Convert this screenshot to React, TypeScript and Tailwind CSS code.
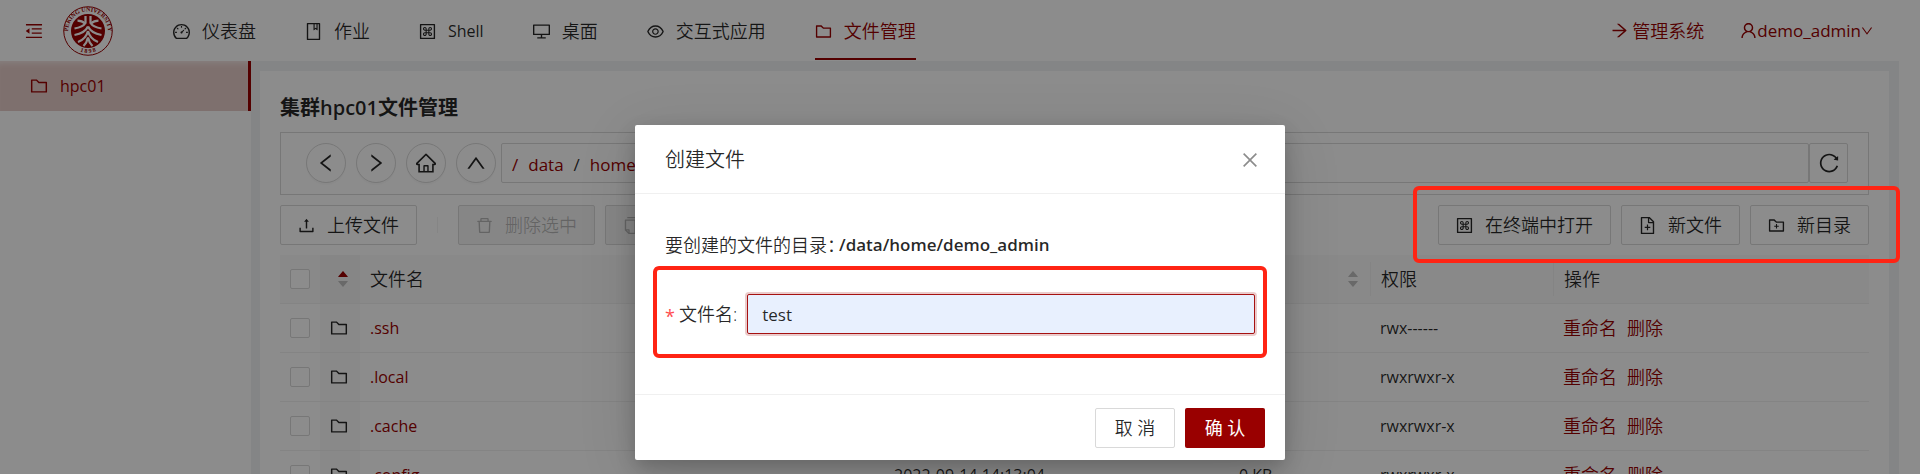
import React from "react";
import {
  AiFillCaretDown,
  AiFillCaretUp,
  AiOutlineArrowRight,
  AiOutlineBook,
  AiOutlineClose,
  AiOutlineCopy,
  AiOutlineDashboard,
  AiOutlineDelete,
  AiOutlineDesktop,
  AiOutlineDown,
  AiOutlineEye,
  AiOutlineFileAdd,
  AiOutlineFolder,
  AiOutlineFolderAdd,
  AiOutlineHome,
  AiOutlineLeft,
  AiOutlineMacCommand,
  AiOutlineMenuFold,
  AiOutlineReload,
  AiOutlineRight,
  AiOutlineUp,
  AiOutlineUpload,
  AiOutlineUser,
} from "react-icons/ai";
import type { IconType } from "react-icons";

// The glyphs carry a 64-unit margin inside their 1024-unit box.
const TRIMMED = "64 64 896 896";

const navItems: { label: string; icon: IconType; latin?: boolean; active?: boolean }[] = [
  { label: "仪表盘", icon: AiOutlineDashboard },
  { label: "作业", icon: AiOutlineBook },
  { label: "Shell", icon: AiOutlineMacCommand, latin: true },
  { label: "桌面", icon: AiOutlineDesktop },
  { label: "交互式应用", icon: AiOutlineEye },
  { label: "文件管理", icon: AiOutlineFolder, active: true },
];

const files = [
  { name: ".ssh", date: "2022-09-14 14:10:22", size: "0 KB", mode: "rwx------" },
  { name: ".local", date: "2022-09-14 14:12:51", size: "0 KB", mode: "rwxrwxr-x" },
  { name: ".cache", date: "2022-09-14 14:12:58", size: "0 KB", mode: "rwxrwxr-x" },
  { name: ".config", date: "2022-09-14 14:13:04", size: "0 KB", mode: "rwxrwxr-x" },
];

function Logo() {
  return (
    <svg viewBox="0 0 100 100" className="size-[50px]" role="img" aria-label="Peking University">
      <defs>
        <path id="ring-top" d="M 13 66 A 40 40 0 1 1 87 66" />
        <path id="ring-bottom" d="M 28 88 A 44 44 0 0 0 72 88" />
      </defs>
      <circle cx="50" cy="50" r="48.5" fill="#fff" stroke="#900" strokeWidth="2" />
      <circle cx="50" cy="50" r="34" fill="#900" />
      <text fill="#900" fontFamily="Liberation Serif" fontSize="12" fontWeight="700">
        <textPath href="#ring-top" startOffset="50%" textAnchor="middle">PEKING UNIVERSITY</textPath>
      </text>
      <text fill="#900" fontFamily="Liberation Serif" fontSize="12" fontWeight="700">
        <textPath href="#ring-bottom" startOffset="50%" textAnchor="middle">1 8 9 8</textPath>
      </text>
      <g fill="none" stroke="#fff" strokeWidth="4.5">
        <path d="M45 20 V34 Q40 42 23 45" />
        <path d="M55 20 V34 Q60 42 77 45" />
        <path d="M29 29 Q38 29 44 35" />
        <path d="M71 29 Q62 29 56 35" />
        <path d="M50 41 Q44 54 23 58" />
        <path d="M50 41 Q56 54 77 58" />
        <path d="M50 50 Q46 66 30 72" />
        <path d="M50 50 Q54 66 70 72" />
        <path d="M50 63 Q48 73 41 80" />
        <path d="M50 63 Q52 73 59 80" />
      </g>
    </svg>
  );
}

function Header() {
  return (
    <header className="flex h-[61px] items-center bg-white pr-[26px] pl-[25px]">
      <button aria-label="收起菜单" className="mr-5 text-[#900]">
        <AiOutlineMenuFold viewBox={TRIMMED} className="size-[18px]" />
      </button>
      <a href="#home" aria-label="首页">
        <Logo />
      </a>
      <nav className="ml-[60px] flex h-full flex-1 gap-[49px]">
        {navItems.map(({ label, icon: Icon, latin, active }) => (
          <a
            key={label}
            href="#nav"
            className={
              active
                ? "mb-px flex items-center gap-3 border-b-2 border-[#900] pt-1 text-[#900]"
                : "mb-px flex items-center gap-3 border-b-2 border-transparent pt-1"
            }
          >
            <Icon viewBox={TRIMMED} className="size-[17px]" />
            <span className={latin ? "text-base font-normal" : "text-lg"}>{label}</span>
          </a>
        ))}
      </nav>
      <a href="#admin" className="mr-9 flex items-center gap-1 text-lg text-[#900]">
        <AiOutlineArrowRight viewBox={TRIMMED} className="size-[17px]" />
        管理系统
      </a>
      <button className="flex items-center text-[17px] font-normal text-[#900]">
        <AiOutlineUser viewBox={TRIMMED} className="size-[17px]" />
        demo_admin
        <AiOutlineDown viewBox={TRIMMED} className="size-3" />
      </button>
    </header>
  );
}

function RoundButton({ label, icon: Icon }: { label: string; icon: IconType }) {
  return (
    <button
      aria-label={label}
      className="flex size-10 items-center justify-center rounded-full border border-[#d9d9d9] bg-white shadow-[0_2px_0_rgba(0,0,0,0.02)]"
    >
      <Icon viewBox={TRIMMED} className="size-5" />
    </button>
  );
}

function ToolButton({ label, icon: Icon, disabled }: { label: string; icon: IconType; disabled?: boolean }) {
  return (
    <button
      disabled={disabled}
      className="flex h-10 items-center gap-3 rounded-xs border border-[#d9d9d9] bg-white px-[17px] text-lg whitespace-nowrap disabled:bg-[#f5f5f5] disabled:text-black/25"
    >
      <Icon viewBox={TRIMMED} className="size-[17px]" />
      {label}
    </button>
  );
}

function Sorter({ ascending }: { ascending?: boolean }) {
  return (
    <span className="flex flex-col text-[14px] text-[#bfbfbf]">
      <AiFillCaretUp className={ascending ? "-mb-1 text-[#900]" : "-mb-1"} />
      <AiFillCaretDown />
    </span>
  );
}

function CheckBox({ label }: { label: string }) {
  return (
    <input
      type="checkbox"
      aria-label={label}
      className="block size-5 appearance-none rounded-xs border border-[#d9d9d9] bg-white"
    />
  );
}

function FileTable() {
  return (
    <table className="w-full table-fixed border-collapse text-left">
      <colgroup>
        <col className="w-10" />
        <col className="w-10" />
        <col />
        <col className="w-[345px]" />
        <col className="w-[141px]" />
        <col className="w-[183px]" />
        <col className="w-[316px]" />
      </colgroup>
      <thead>
        <tr className="h-12 border-b border-[#f0f0f0] bg-[#fafafa] text-lg">
          <th className="px-2.5 font-[350]"><CheckBox label="全选" /></th>
          <th className="bg-[#f5f5f5] pl-4 font-[350]"><Sorter ascending /></th>
          <th className="px-2.5 font-[350]">文件名</th>
          <th className="px-2.5 font-[350]">修改日期</th>
          <th className="px-2.5 font-[350]">
            <span className="flex items-center justify-between">大小<Sorter /></span>
          </th>
          <th className="p-0 font-[350]">
            <span className="flex h-[34px] items-center border-l border-[#f0f0f0] px-2.5">权限</span>
          </th>
          <th className="p-0 font-[350]">
            <span className="flex h-[34px] items-center border-l border-[#f0f0f0] px-2.5">操作</span>
          </th>
        </tr>
      </thead>
      <tbody>
        {files.map((file) => (
          <tr key={file.name} className="h-[49px] border-b border-[#f0f0f0] text-base">
            <td className="px-2.5"><CheckBox label={file.name} /></td>
            <td className="bg-[#fafafa] pl-2.5"><AiOutlineFolder viewBox={TRIMMED} className="size-[18px]" /></td>
            <td className="px-2.5"><a href="#file" className="font-normal text-[#900]">{file.name}</a></td>
            <td className="px-2.5 font-normal">{file.date}</td>
            <td className="px-2.5 font-normal">{file.size}</td>
            <td className="px-2.5 font-normal">{file.mode}</td>
            <td className="px-2.5">
              <span className="flex gap-2.5 text-lg text-[#900]">
                <a href="#rename">重命名</a>
                <a href="#delete">删除</a>
              </span>
            </td>
          </tr>
        ))}
      </tbody>
    </table>
  );
}

function FileManager() {
  return (
    <main className="min-w-0 flex-1 bg-white px-5 pt-[22px]">
      <h1 className="text-xl leading-[30px] font-semibold">集群hpc01文件管理</h1>
      <div className="mt-[9px] flex border border-[#d9d9d9] pt-2.5 pr-5 pb-[11px] pl-[25px]">
        <div className="flex gap-2.5">
          <RoundButton label="后退" icon={AiOutlineLeft} />
          <RoundButton label="前进" icon={AiOutlineRight} />
          <RoundButton label="主目录" icon={AiOutlineHome} />
          <RoundButton label="上一级" icon={AiOutlineUp} />
        </div>
        <div className="ml-[5px] flex h-10 flex-1 items-center gap-2.5 rounded-xs border border-[#d9d9d9] px-2.5 pt-1 text-[17px] font-normal">
          <a href="#root" className="text-[#900]">/</a>
          <a href="#data" className="text-[#900]">data</a>
          <span>/</span>
          <a href="#home" className="text-[#900]">home</a>
        </div>
        <button aria-label="刷新" className="flex h-10 w-[39px] items-center justify-center rounded-xs border border-[#d9d9d9]">
          <AiOutlineReload viewBox={TRIMMED} className="size-5" />
        </button>
      </div>
      <div className="my-2.5 flex items-center justify-between">
        <div className="flex items-center gap-2.5">
          <ToolButton label="上传文件" icon={AiOutlineUpload} />
          <span className="mx-2.5 h-4 w-px bg-black/5" />
          <ToolButton label="删除选中" icon={AiOutlineDelete} disabled />
          <ToolButton label="复制选中" icon={AiOutlineCopy} disabled />
        </div>
        <div className="flex gap-2.5">
          <ToolButton label="在终端中打开" icon={AiOutlineMacCommand} />
          <ToolButton label="新文件" icon={AiOutlineFileAdd} />
          <ToolButton label="新目录" icon={AiOutlineFolderAdd} />
        </div>
      </div>
      <FileTable />
    </main>
  );
}

function CreateFileDialog() {
  return (
    <div
      role="dialog"
      aria-labelledby="dialog-title"
      className="w-[650px] rounded-xs bg-white shadow-[0_8px_20px_rgba(0,0,0,0.2),0_12px_60px_rgba(0,0,0,0.12)]"
    >
      <div className="flex h-[69px] items-center justify-between border-b border-[#f0f0f0] px-[30px] pt-0.5">
        <h2 id="dialog-title" className="text-xl font-[350]">创建文件</h2>
        <button aria-label="关闭" className="-mr-1 text-black/45">
          <AiOutlineClose viewBox={TRIMMED} className="size-[18px]" />
        </button>
      </div>
      <form className="px-[30px] pt-9 pb-[60px]">
        <p className="flex items-center text-lg leading-[30px]">
          要创建的文件的目录：
          <strong className="-ml-1.5 text-[17px] font-semibold">/data/home/demo_admin</strong>
        </p>
        <div className="relative mt-[34px] flex items-center">
          <label htmlFor="file-name" className="mr-2.5 flex items-center text-lg">
            <span className="mr-1 pt-1 font-normal text-[#ff4d4f]">*</span>
            文件名:
          </label>
          <input
            id="file-name"
            defaultValue="test"
            className="h-10 min-w-0 flex-1 rounded-xs border border-[#a61111] bg-[#e8f0fe] px-3.5 text-[17px] font-normal shadow-[0_0_0_2px_rgba(153,0,0,0.2)] outline-none"
          />
          <div className="pointer-events-none absolute -inset-x-3 -top-7 -bottom-6 rounded-md border-4 border-[#ff2414]" />
        </div>
      </form>
      <div className="flex justify-end gap-2.5 border-t border-[#f0f0f0] px-5 pt-[13px] pb-3">
        <button className="h-10 w-20 rounded-xs border border-[#d9d9d9] bg-white text-lg">取 消</button>
        <button className="h-10 w-20 rounded-xs bg-[#900] text-lg font-normal text-white">确 认</button>
      </div>
    </div>
  );
}

export default function App() {
  return (
    <div className="relative h-screen overflow-hidden bg-white font-['Open_Sans','Noto_Sans_CJK_SC',sans-serif] font-[350] text-black/85">
      <div className="mr-[21px] bg-[#f0f2f5]">
        <Header />
        <div className="flex">
          <aside className="w-[251px] shrink-0 bg-white">
            <a
              href="#hpc01"
              className="flex h-[50px] items-center gap-3 border-r-3 border-[#900] bg-[#e6ccc8] pl-[30px] text-base font-normal text-[#900] shadow-[inset_0_6px_6px_-4px_rgba(255,255,255,0.6)]"
            >
              <AiOutlineFolder viewBox={TRIMMED} className="size-[18px]" />
              hpc01
            </a>
          </aside>
          <div className="flex min-w-0 flex-1 pt-2.5 pr-2.5 pl-[9px]">
            <FileManager />
          </div>
        </div>
      </div>
      <div className="absolute inset-0 flex items-start justify-center bg-black/45 pt-[125px]">
        <CreateFileDialog />
      </div>
      <div className="pointer-events-none absolute top-[186px] right-5 h-[77px] w-[487px] rounded-md border-4 border-[#ff2414]" />
    </div>
  );
}
